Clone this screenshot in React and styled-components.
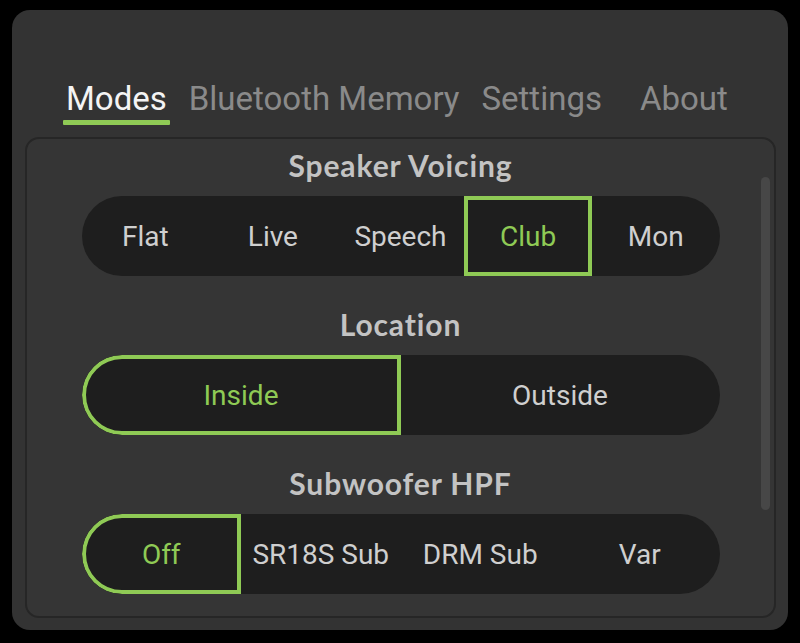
import React from "react";
import styled, { createGlobalStyle } from "styled-components";

const GREEN = "#8fca55";

const Global = createGlobalStyle`
  html, body { margin: 0; padding: 0; background: #000; }
  body { font-family: Roboto, "Liberation Sans", sans-serif; }
  * { box-sizing: border-box; }
`;

const Screen = styled.div`
  width: 800px;
  height: 643px;
  background: #000;
  padding: 10px 12px 0 12px;
`;

const Device = styled.div`
  width: 776px;
  height: 620px;
  background: #333333;
  border-radius: 18px;
  padding: 69px 12px 12px 13px;
  display: flex;
  flex-direction: column;
`;

const Tabs = styled.nav`
  display: flex;
  align-items: flex-start;
  gap: 16px;
  padding-left: 38px;
  margin-bottom: 12px;
`;

const Tab = styled.div`
  display: flex;
  flex-direction: column;
  margin-left: ${(p) => (p.$push ? `${p.$push}px` : "0")};
`;

const TabLabel = styled.span`
  font-family: Roboto, "Liberation Sans", sans-serif;
  font-size: 33px;
  line-height: 40px;
  padding: 0 3px;
  color: ${(p) => (p.$active ? "#f4f4f4" : "#8a8a8a")};
  white-space: nowrap;
`;

const Underline = styled.div`
  height: 5px;
  margin-top: 1px;
  border-radius: 1px;
  background: ${(p) => (p.$active ? GREEN : "transparent")};
`;

const Panel = styled.section`
  position: relative;
  height: 481px;
  border: 2px solid #262626;
  border-radius: 14px;
  background: #353535;
  padding-top: 10px;
  display: flex;
  flex-direction: column;
  align-items: center;
`;

const Scrollbar = styled.div`
  position: absolute;
  right: 4px;
  top: 38px;
  width: 9px;
  height: 333px;
  border-radius: 5px;
  background: #474747;
`;

const Title = styled.h2`
  margin: ${(p) => (p.$first ? "0" : "32px")} 0 15px 0;
  height: 32px;
  line-height: 32px;
  font-family: Lato, "Open Sans", sans-serif;
  font-weight: 700;
  font-size: 30px;
  letter-spacing: 0.9px;
  color: #c3c3c3;
  text-align: center;
  white-space: nowrap;
`;

const Bar = styled.div`
  width: 638px;
  height: 80px;
  border-radius: 40px;
  background: #1e1e1e;
  display: grid;
  grid-template-columns: repeat(${(p) => p.$count}, 1fr);
  overflow: hidden;
  flex-shrink: 0;
`;

const Segment = styled.div`
  display: flex;
  align-items: center;
  justify-content: center;
  font-family: Roboto, "Liberation Sans", sans-serif;
  font-size: 28px;
  color: ${(p) => (p.$active ? GREEN : "#cfcfcf")};
  border: 4px solid ${(p) => (p.$active ? GREEN : "transparent")};
  border-radius: ${(p) =>
    p.$active && p.$first ? "40px 0 0 40px" : p.$active && p.$last ? "0 40px 40px 0" : "0"};
  white-space: nowrap;
`;

const sections = [
  { title: "Speaker Voicing", options: ["Flat", "Live", "Speech", "Club", "Mon"], active: 3 },
  { title: "Location", options: ["Inside", "Outside"], active: 0 },
  { title: "Subwoofer HPF", options: ["Off", "SR18S Sub", "DRM Sub", "Var"], active: 0 },
];

const tabs = [
  { label: "Modes", active: true },
  { label: "Bluetooth Memory" },
  { label: "Settings" },
  { label: "About", push: 16 },
];

export default function App() {
  return (
    <>
      <Global />
      <Screen>
        <Device>
          <Tabs>
            {tabs.map((t) => (
              <Tab key={t.label} $push={t.push}>
                <TabLabel $active={t.active}>{t.label}</TabLabel>
                <Underline $active={t.active} />
              </Tab>
            ))}
          </Tabs>
          <Panel>
            {sections.map((s, i) => (
              <React.Fragment key={s.title}>
                <Title $first={i === 0}>{s.title}</Title>
                <Bar $count={s.options.length}>
                  {s.options.map((o, j) => (
                    <Segment
                      key={o}
                      $active={j === s.active}
                      $first={j === 0}
                      $last={j === s.options.length - 1}
                    >
                      {o}
                    </Segment>
                  ))}
                </Bar>
              </React.Fragment>
            ))}
            <Scrollbar />
          </Panel>
        </Device>
      </Screen>
    </>
  );
}
